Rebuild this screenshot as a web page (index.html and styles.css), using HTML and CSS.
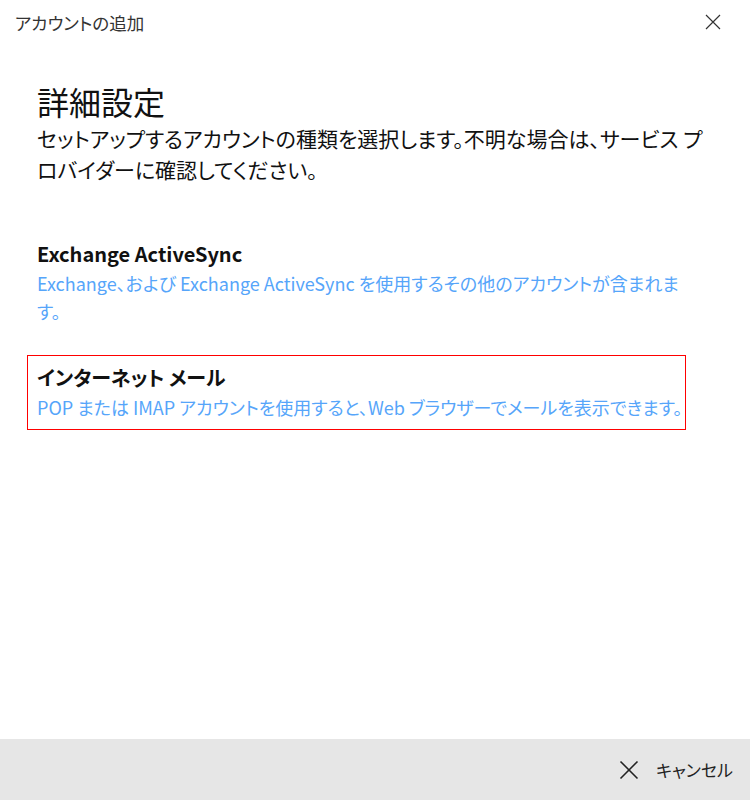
FILE: index.html
```html
<!DOCTYPE html>
<html lang="ja">
<head>
<meta charset="utf-8">
<link rel="stylesheet" href="styles.css">
</head>
<body>
<div class="window">
  <header class="titlebar">
    <span class="title">アカウントの追加</span>
    <svg class="close" width="16" height="16" viewBox="0 0 16 16"><path d="M1 1L15 15M15 1L1 15" stroke="#333" stroke-width="1.2" fill="none"/></svg>
  </header>
  <main class="content">
    <h1 class="heading">詳細設定</h1>
    <p class="desc">セットアップするアカウントの種類を選択します。不明な場合は、サービス プ<br>ロバイダーに確認してください。</p>
    <div class="option">
      <div class="opt-title">Exchange ActiveSync</div>
      <div class="opt-desc">Exchange、および Exchange ActiveSync を使用するその他のアカウントが含まれま<br>す。</div>
    </div>
    <div class="option selected">
      <div class="opt-title">インターネット メール</div>
      <div class="opt-desc">POP または IMAP アカウントを使用すると、Web ブラウザーでメールを表示できます。</div>
    </div>
  </main>
  <footer class="footer">
    <div class="cancel">
      <svg width="20" height="20" viewBox="0 0 20 20"><path d="M1.5 1.5L18.5 18.5M18.5 1.5L1.5 18.5" stroke="#222" stroke-width="1.6" fill="none"/></svg>
      <span>キャンセル</span>
    </div>
  </footer>
</div>
</body>
</html>
```
FILE: styles.css
```css
html, body {
  margin: 0;
  padding: 0;
  background: #fff;
}
body {
  font-family: "Noto Sans CJK JP", "Noto Sans", sans-serif;
  font-feature-settings: "palt";
  color: #000;
}
.window {
  width: 750px;
  height: 800px;
  display: flex;
  flex-direction: column;
}
.titlebar {
  height: 44px;
  display: flex;
  align-items: center;
  justify-content: space-between;
  padding: 0 29px 0 15px;
}
.title {
  font-size: 17.5px;
  color: #333;
}
.content {
  flex: 1;
  padding: 35px 0 0 37px;
}
.heading {
  margin: 0;
  font-size: 32px;
  font-weight: 400;
  line-height: 44px;
  color: #111;
}
.desc {
  margin: 0;
  font-size: 21px;
  line-height: 31px;
  color: #111;
}
.option {
  margin: 54px 0 0 0;
}
.opt-title {
  font-size: 20px;
  font-weight: 600;
  line-height: 30px;
  color: #111;
}
.opt-desc {
  font-size: 18px;
  line-height: 28px;
  color: #56a5fa;
}
.selected {
  margin: 30px 0 0 -10px;
  width: 648px;
  border-width: 1px;
  border-style: solid;
  border-color: #ff0000;
  padding: 7px 0 8px 9px;
}
.footer {
  height: 61px;
  background: #e6e6e6;
  display: flex;
  justify-content: flex-end;
  align-items: center;
  padding-right: 17px;
}
.cancel {
  display: flex;
  align-items: center;
  gap: 17px;
  font-size: 17px;
  color: #222;
}
```
